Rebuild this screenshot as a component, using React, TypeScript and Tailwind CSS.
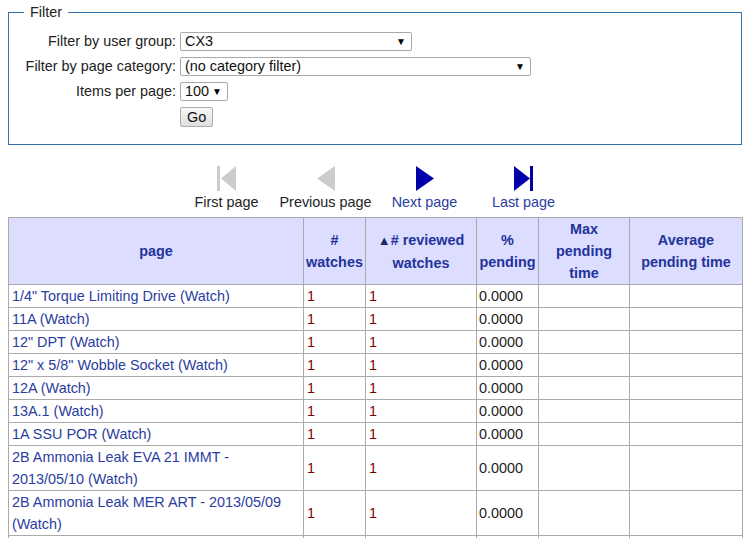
import React from 'react';

const font = { fontFamily: '"Liberation Sans", Arial, sans-serif' };

type Row = { page: string; watches: number; reviewed: number; pending: string };

const rows: Row[] = [
  { page: '1/4" Torque Limiting Drive (Watch)', watches: 1, reviewed: 1, pending: '0.0000' },
  { page: '11A (Watch)', watches: 1, reviewed: 1, pending: '0.0000' },
  { page: '12" DPT (Watch)', watches: 1, reviewed: 1, pending: '0.0000' },
  { page: '12" x 5/8" Wobble Socket (Watch)', watches: 1, reviewed: 1, pending: '0.0000' },
  { page: '12A (Watch)', watches: 1, reviewed: 1, pending: '0.0000' },
  { page: '13A.1 (Watch)', watches: 1, reviewed: 1, pending: '0.0000' },
  { page: '1A SSU POR (Watch)', watches: 1, reviewed: 1, pending: '0.0000' },
  { page: '2B Ammonia Leak EVA 21 IMMT - 2013/05/10 (Watch)', watches: 1, reviewed: 1, pending: '0.0000' },
  { page: '2B Ammonia Leak MER ART - 2013/05/09 (Watch)', watches: 1, reviewed: 1, pending: '0.0000' },
  { page: '2B Ammonia Leak P1-3A - 2013/05/10 (Watch)', watches: 1, reviewed: 1, pending: '0.0000' },
  { page: '2B PCU (Watch)', watches: 1, reviewed: 1, pending: '0.0000' },
];

function FakeSelect({ value, width }: { value: string; width: string }) {
  return (
    <div
      className={`${width} h-[19px] flex items-center justify-between border border-[#a9a9a9] rounded-[2px] bg-white pl-[4px] pr-[5px] text-[14.4px] leading-none text-[#111]`}
    >
      <span>{value}</span>
      <span className="text-[10px] text-black">▼</span>
    </div>
  );
}

function NavItem({
  label,
  active,
  icon,
}: {
  label: string;
  active: boolean;
  icon: React.ReactNode;
}) {
  return (
    <div className="w-[99px] flex flex-col items-center">
      <svg width="20" height="25" viewBox="0 0 20 25">
        {icon}
      </svg>
      <span
        className={`mt-[2px] text-[14.4px] leading-[18px] ${active ? 'text-[#2a3da0]' : 'text-[#222]'}`}
      >
        {label}
      </span>
    </div>
  );
}

export default function App() {
  const gray = '#cccccc';
  const blue = '#0000aa';
  return (
    <div className="bg-white min-h-[538px] px-[8px] pt-[4px] text-[#222]" style={font}>
      <fieldset className="border border-[#3370b0] w-[734px] pb-[17px]">
        <legend className="ml-[15px] px-[6px] text-[14.4px] leading-[16px] text-[#222]">Filter</legend>
        <div className="grid grid-cols-[167px_1fr] gap-x-[4px] gap-y-[6px] mt-[12px] text-[14.4px] leading-[19px] items-center">
          <div className="text-right">Filter by user group:</div>
          <FakeSelect value="CX3" width="w-[232px]" />
          <div className="text-right">Filter by page category:</div>
          <FakeSelect value="(no category filter)" width="w-[351px]" />
          <div className="text-right">Items per page:</div>
          <FakeSelect value="100" width="w-[48px]" />
          <div />
          <div>
            <button className="h-[20px] px-[6px] border border-[#adadad] rounded-[2px] bg-gradient-to-b from-[#f8f8f8] to-[#dedede] text-[14.4px] leading-none text-[#111]">
              Go
            </button>
          </div>
        </div>
      </fieldset>

      <div className="flex justify-center mt-[21px] w-[734px]">
        <NavItem
          label="First page"
          active={false}
          icon={
            <>
              <rect x="0" y="0" width="3" height="25" fill={gray} />
              <polygon points="4,12.5 19,0 19,25" fill={gray} />
            </>
          }
        />
        <NavItem
          label="Previous page"
          active={false}
          icon={<polygon points="1,12.5 19,0 19,25" fill={gray} />}
        />
        <NavItem
          label="Next page"
          active
          icon={<polygon points="1,0 19,12.5 1,25" fill={blue} />}
        />
        <NavItem
          label="Last page"
          active
          icon={
            <>
              <polygon points="0,0 16,12.5 0,25" fill={blue} />
              <rect x="16" y="0" width="3" height="25" fill={blue} />
            </>
          }
        />
      </div>

      <table className="mt-[6px] w-[734px] table-fixed border-collapse text-[14.4px] leading-[22px]">
        <colgroup>
          <col className="w-[295px]" />
          <col className="w-[62px]" />
          <col className="w-[111px]" />
          <col className="w-[62px]" />
          <col className="w-[91px]" />
          <col className="w-[113px]" />
        </colgroup>
        <thead>
          <tr className="bg-[#ddddff] text-[#223399] font-bold">
            <th className="border border-[#aaaaaa] px-[3px] text-center align-middle">page</th>
            <th className="border border-[#aaaaaa] px-[2px] text-center align-middle">
              #<br />watches
            </th>
            <th className="border border-[#aaaaaa] px-[3px] text-center align-middle">
              <span className="text-[13px] text-[#1a2a6a]">▲</span># reviewed
              <br />
              watches
            </th>
            <th className="border border-[#aaaaaa] px-[2px] text-center align-middle">
              %<br />pending
            </th>
            <th className="border border-[#aaaaaa] px-[3px] text-center align-middle">
              Max
              <br />
              pending
              <br />
              time
            </th>
            <th className="border border-[#aaaaaa] px-[3px] text-center align-middle">
              Average
              <br />
              pending time
            </th>
          </tr>
        </thead>
        <tbody>
          {rows.map((r) => (
            <tr key={r.page}>
              <td className="border border-[#aaaaaa] px-[3px] align-middle text-[#2a3da0]">{r.page}</td>
              <td className="border border-[#aaaaaa] px-[3px] align-middle text-[#800000]">{r.watches}</td>
              <td className="border border-[#aaaaaa] px-[3px] align-middle text-[#800000]">{r.reviewed}</td>
              <td className="border border-[#aaaaaa] px-[2px] align-middle text-[#222]">{r.pending}</td>
              <td className="border border-[#aaaaaa] px-[3px] align-middle"></td>
              <td className="border border-[#aaaaaa] px-[3px] align-middle"></td>
            </tr>
          ))}
        </tbody>
      </table>
    </div>
  );
}
